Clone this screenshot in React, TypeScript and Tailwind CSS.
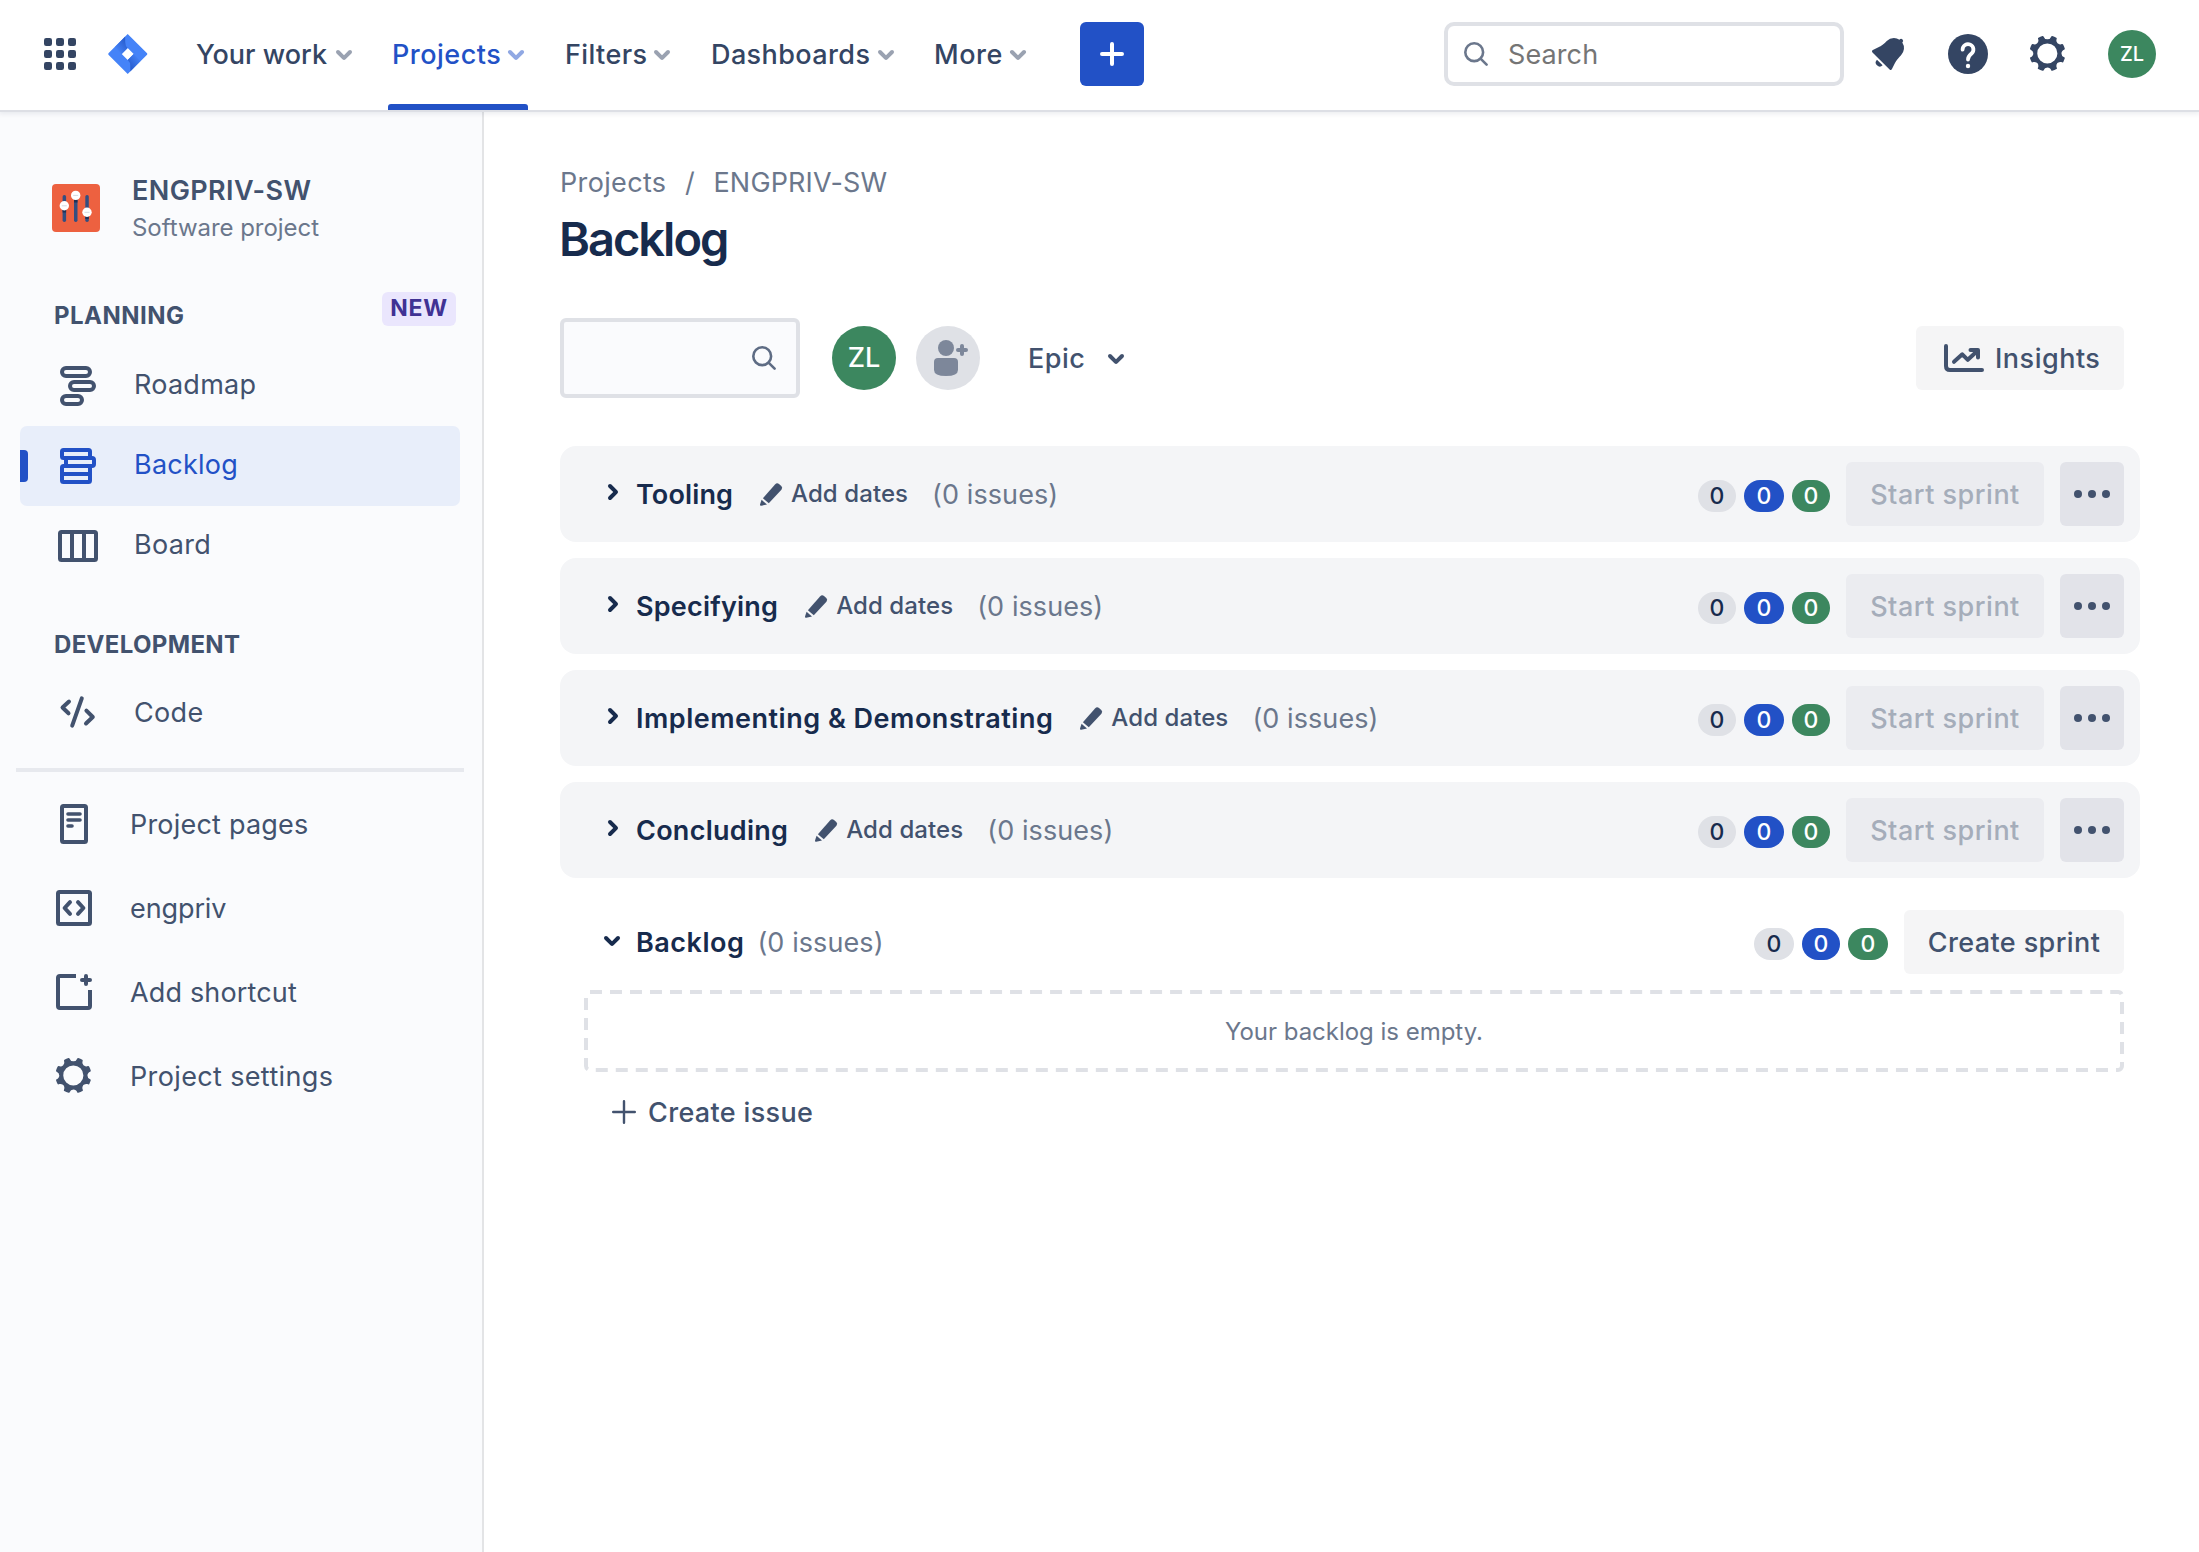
import type { ReactNode } from "react";

const GEAR =
  "M11.701 16.7a5.002 5.002 0 110-10.003 5.002 5.002 0 010 10.004m8.368-3.117a1.995 1.995 0 01-1.346-1.885c0-.876.563-1.613 1.345-1.885a.48.48 0 00.315-.574 8.947 8.947 0 00-.836-1.993.477.477 0 00-.598-.195 2.04 2.04 0 01-1.29.08 1.988 1.988 0 01-1.404-1.395 2.04 2.04 0 01.076-1.297.478.478 0 00-.196-.597 8.98 8.98 0 00-1.975-.826.479.479 0 00-.574.314 1.995 1.995 0 01-1.885 1.346 1.994 1.994 0 01-1.884-1.345.482.482 0 00-.575-.315c-.708.2-1.379.485-2.004.842a.47.47 0 00-.198.582A2.002 2.002 0 014.445 7.06a.478.478 0 00-.595.196 8.946 8.946 0 00-.833 1.994.48.48 0 00.308.572 1.995 1.995 0 011.323 1.877c0 .867-.552 1.599-1.324 1.877a.479.479 0 00-.308.57 8.99 8.99 0 00.723 1.79.477.477 0 00.624.194c.595-.273 1.343-.264 2.104.238.117.077.225.185.302.3.527.8.512 1.58.198 2.188a.473.473 0 00.168.628 8.946 8.946 0 002.11.897.474.474 0 00.57-.313 1.995 1.995 0 011.886-1.353c.878 0 1.618.567 1.887 1.353a.475.475 0 00.57.313 8.964 8.964 0 002.084-.883.473.473 0 00.167-.631c-.318-.608-.337-1.393.191-2.195.077-.116.185-.225.302-.302.772-.511 1.527-.513 2.125-.23a.477.477 0 00.628-.19 8.925 8.925 0 00.728-1.793.478.478 0 00-.314-.573";

function Gear({ className = "" }: { className?: string }) {
  return (
    <svg viewBox="0 0 24 24" className={`h-12 w-12 shrink-0 ${className}`} fill="currentColor" fillRule="evenodd">
      <path d={GEAR} />
    </svg>
  );
}

function ChevronDown({ className = "" }: { className?: string }) {
  return (
    <svg viewBox="8 10 8 5" className={`h-[10px] w-4 shrink-0 overflow-visible ${className}`} fill="currentColor">
      <path d="M8.292 10.293a1.009 1.009 0 000 1.419l2.939 2.965c.218.215.5.322.779.322s.556-.107.769-.322l2.93-2.955a1.01 1.01 0 000-1.419.987.987 0 00-1.406 0l-2.298 2.317-2.307-2.327a.99.99 0 00-1.406 0z" />
    </svg>
  );
}

function ChevronRight({ className = "" }: { className?: string }) {
  return (
    <svg viewBox="10 8 5 8" className={`h-4 w-[10px] shrink-0 overflow-visible ${className}`} fill="currentColor">
      <path d="M10.294 9.698a.988.988 0 010-1.407 1.01 1.01 0 011.419 0l2.965 2.94a1.09 1.09 0 010 1.548l-2.955 2.93a1.01 1.01 0 01-1.42 0 .988.988 0 010-1.407l2.318-2.297-2.327-2.307z" />
    </svg>
  );
}

function Magnifier({ className = "" }: { className?: string }) {
  return (
    <svg viewBox="0 0 24 24" className={`h-6 w-6 shrink-0 ${className}`} fill="none" stroke="currentColor" strokeWidth="2.6" strokeLinecap="round">
      <circle cx="10.2" cy="10.2" r="8.9" />
      <path d="M16.8 16.8 22.6 22.6" />
    </svg>
  );
}

function JiraLogo() {
  return (
    <svg viewBox="0 0 40 40" className="ml-8 h-10 w-10 shrink-0">
      <defs>
        <linearGradient id="fold-top" x1="19" y1="9" x2="9" y2="17" gradientUnits="userSpaceOnUse">
          <stop offset="0" stopColor="#2a5fd0" />
          <stop offset="1" stopColor="#4583f8" />
        </linearGradient>
        <linearGradient id="fold-bottom" x1="21" y1="31" x2="31" y2="23" gradientUnits="userSpaceOnUse">
          <stop offset="0" stopColor="#2a5fd0" />
          <stop offset="1" stopColor="#4583f8" />
        </linearGradient>
      </defs>
      <path
        fill="#4583f8"
        fillRule="evenodd"
        d="M19.7 0 38.8 19.1Q39.8 20 38.8 20.9L19.7 40 .7 20.9Q-.2 20 .7 19.1ZM19.7 14 13.7 20 19.7 26 25.7 20Z"
      />
      <path fill="url(#fold-top)" d="M17.2 2.5V8Q17.2 12 19.7 14L13.7 20 7 13Z" />
      <path fill="url(#fold-bottom)" d="M22.3 37.5V32Q22.3 28 19.7 26L25.7 20 32.4 27Z" />
    </svg>
  );
}

function AppGrid() {
  return (
    <svg viewBox="0 0 32 32" className="h-8 w-8 shrink-0 fill-[#344563]">
      {[0, 12, 24].map((y) => [0, 12, 24].map((x) => <rect key={`${x}-${y}`} x={x} y={y} width="8" height="8" rx="2.2" />))}
    </svg>
  );
}

function NavItem({ label, box, tracking, active = false }: { label: string; box: string; tracking: string; active?: boolean }) {
  return (
    <div
      className={`relative flex h-full items-center justify-between pb-[2px] text-[27px] font-medium whitespace-nowrap ${box} ${
        active ? "text-[#2251c6]" : "text-[#344563]"
      }`}
    >
      <span className={`mt-[2px] ${tracking}`}>{label}</span>
      <ChevronDown className={`mt-[2px] ${active ? "text-[#90a8e3]" : "text-[#9aa2b1]"}`} />
      {active && <span className="absolute bottom-0 left-[-4px] h-[6px] w-[140px] rounded-t-[3px] bg-[#2251c6]" />}
    </div>
  );
}

function Header() {
  return (
    <header className="relative z-10 flex h-[110px] shrink-0 items-center bg-white pl-11 shadow-[0_2px_0_#dddfe5,0_3px_5px_1px_rgba(9,30,66,0.08)]">
      <div className="flex items-center pb-[2px]">
        <AppGrid />
        <JiraLogo />
      </div>
      <nav className="ml-12 flex h-full">
        <NavItem label="Your work" box="w-[156px] mr-[40px]" tracking="tracking-[0.03px]" />
        <NavItem label="Projects" box="w-[132px] mr-[41px]" tracking="tracking-[0.5px]" active />
        <NavItem label="Filters" box="w-[105px] mr-[41px]" tracking="tracking-[0.4px]" />
        <NavItem label="Dashboards" box="w-[183px] mr-[40px]" tracking="tracking-[0.4px]" />
        <NavItem label="More" box="w-[92px] mr-[54px]" tracking="tracking-[0.5px]" />
      </nav>
      <button className="mb-[2px] flex h-16 w-16 items-center justify-center rounded-[6px] bg-[#2251c6]">
        <svg viewBox="0 0 24 24" className="h-6 w-6" stroke="#fff" strokeWidth="4" strokeLinecap="round">
          <path d="M12 2V22M2 12H22" />
        </svg>
      </button>
      <div className="mr-[43px] mb-[2px] ml-auto flex items-center text-[#344563]">
        <div className="flex h-16 w-[400px] items-center rounded-[10px] border-4 border-[#dfe1e6] pl-4">
          <Magnifier className="text-[#6b778c]" />
          <span className="mt-[2px] ml-5 text-[27px] tracking-[0.1px] text-[#757575]">Search</span>
        </div>
        <svg viewBox="0 0 24 24" className="ml-5 h-12 w-12" fill="currentColor">
          <path d="M6.485 17.669a2 2 0 002.829 0l-2.829-2.83a2 2 0 000 2.83zm4.897-12.191l-.725.725c-.782.782-2.21 1.813-3.206 2.311l-3.017 1.509c-.495.248-.584.774-.187 1.171l8.556 8.556c.398.396.922.313 1.171-.188l1.51-3.016c.494-.988 1.526-2.42 2.311-3.206l.725-.726a5.048 5.048 0 00.64-6.356 1.01 1.01 0 10-1.354-1.494c-.023.025-.046.049-.066.075a5.043 5.043 0 00-2.788-.84 5.036 5.036 0 00-3.57 1.478z" />
        </svg>
        <svg viewBox="0 0 48 48" className="ml-8 h-12 w-12">
          <circle cx="24" cy="24" r="20" fill="currentColor" />
          <path d="M18.6 19.6a5.4 5.4 0 1 1 8.8 4.1C25.2 25.5 24 26.4 24 29.6" fill="none" stroke="#fff" strokeWidth="3.8" strokeLinecap="round" />
          <circle cx="24" cy="36" r="2.2" fill="#fff" />
        </svg>
        <Gear className="ml-8" />
        <div className="ml-9 flex h-12 w-12 items-center justify-center rounded-full bg-[#3c875f] text-[20px] font-medium text-white">ZL</div>
      </div>
    </header>
  );
}

function LineIcon({ children }: { children: ReactNode }) {
  return (
    <svg viewBox="0 0 40 40" className="h-10 w-10 shrink-0" fill="none" stroke="currentColor" strokeWidth="4">
      {children}
    </svg>
  );
}

function SideItem({ icon, label, text, selected = false }: { icon: ReactNode; label: string; text: string; selected?: boolean }) {
  return (
    <div
      className={`relative mr-[22px] ml-5 flex h-20 items-center rounded-[7px] pl-[38px] text-[27px] ${
        selected ? "bg-[#e8eefa] text-[#2251c6]" : "text-[#42526e]"
      }`}
    >
      {selected && <span className="absolute top-6 left-0 h-8 w-2 rounded-r-[4px] bg-[#2251c6]" />}
      {icon}
      <span className={`ml-9 ${text}`}>{label}</span>
    </div>
  );
}

function ShortcutItem({ icon, label, tracking }: { icon: ReactNode; label: string; tracking: string }) {
  return (
    <div className="flex h-[84px] items-center pl-[54px] text-[27px] text-[#42526e]">
      <span className="flex h-10 w-10 items-center justify-center">{icon}</span>
      <span className={`mt-[2px] ml-9 ${tracking}`}>{label}</span>
    </div>
  );
}

function ProjectAvatar() {
  return (
    <svg viewBox="0 0 48 48" className="h-12 w-12 shrink-0">
      <rect width="48" height="48" rx="4" fill="#ed6140" />
      <g fill="#344e80">
        <rect x="10.6" y="11" width="3.5" height="27" rx="1.7" />
        <rect x="22" y="11" width="3.5" height="27" rx="1.7" />
        <rect x="33.3" y="11" width="3.5" height="27" rx="1.7" />
      </g>
      <g fill="#1f3157">
        <rect x="10.6" y="24" width="3.5" height="4.5" />
        <rect x="22" y="14" width="3.5" height="4.5" />
        <rect x="33.3" y="31" width="3.5" height="4" />
      </g>
      <g fill="#fff">
        <circle cx="12.3" cy="21.8" r="4.7" />
        <circle cx="23.7" cy="11.4" r="4.7" />
        <circle cx="35" cy="28.3" r="4.7" />
      </g>
      <g stroke="#d5dae3" strokeWidth="1">
        <path d="M9.8 21.8h5M21.2 11.4h5M32.5 28.3h5" />
      </g>
    </svg>
  );
}

function Sidebar() {
  return (
    <aside className="flex w-[484px] shrink-0 flex-col border-r-2 border-[#e3e4e6] bg-[#fafbfd]">
      <div className="mt-[66px] flex h-16 items-center pl-[52px]">
        <ProjectAvatar />
        <div className="ml-8 flex flex-col gap-[11px] pt-px">
          <span className="text-[27px] leading-7 font-semibold tracking-[0.4px] text-[#42526e]">ENGPRIV-SW</span>
          <span className="text-[24px] leading-6 tracking-[-0.04px] text-[#6b778c]">Software project</span>
        </div>
      </div>
      <div className="flex h-[106px] items-start justify-between pr-[26px] pl-[54px]">
        <span className="mt-16 text-[24px] leading-6 font-bold tracking-[0.48px] text-[#42526e]">PLANNING</span>
        <span className="mt-[52px] flex h-[34px] w-[74px] justify-center rounded-[6px] bg-[#eae6fd] pt-1 text-[23px] leading-6 font-bold tracking-[0.75px] text-[#403294]">
          NEW
        </span>
      </div>
      <SideItem
        label="Roadmap"
        text="pb-[2px] tracking-[0.25px]"
        icon={
          <LineIcon>
            <rect x="4" y="2" width="28" height="8" rx="4" />
            <rect x="12" y="16" width="24" height="8" rx="4" />
            <rect x="4" y="30" width="20" height="8" rx="4" />
          </LineIcon>
        }
      />
      <SideItem
        label="Backlog"
        text="pb-[2px] tracking-[0.25px]"
        selected
        icon={
          <LineIcon>
            <rect x="4" y="4" width="28" height="8" rx="1.5" />
            <rect x="8" y="12" width="28" height="8" rx="2" />
            <rect x="4" y="20" width="28" height="16" rx="1.5" />
            <path d="M4 28H32" />
          </LineIcon>
        }
      />
      <SideItem
        label="Board"
        text="pb-[2px] tracking-[0.3px]"
        icon={
          <LineIcon>
            <rect x="2" y="6" width="36" height="28" rx="1.5" />
            <path d="M14 6V34M26 6V34" />
          </LineIcon>
        }
      />
      <div className="h-[86px] pt-[47px] pl-[54px] text-[24px] leading-6 font-bold tracking-[0.34px] text-[#42526e]">DEVELOPMENT</div>
      <SideItem
        label="Code"
        text="pt-[2px] tracking-[0.35px]"
        icon={
          <svg viewBox="0 0 40 40" className="h-10 w-10 shrink-0" fill="none" stroke="currentColor" strokeWidth="4" strokeLinecap="round" strokeLinejoin="round">
            <path d="M11 9.5 4.5 15.5 10.5 21.3M23.8 6.3 14.2 33.6M28.4 18.6 34.8 25 28 31.5" />
          </svg>
        }
      />
      <div className="mt-4 mr-[18px] ml-4 h-1 bg-[#e7e9ee]" />
      <div className="mt-[10px]">
        <ShortcutItem
          label="Project pages"
          tracking="tracking-[0.2px]"
          icon={
            <LineIcon>
              <rect x="8" y="2" width="24" height="36" rx="1.5" />
              <path d="M14 10H26M14 16H26M14 22H18" strokeWidth="3.6" strokeLinecap="round" />
            </LineIcon>
          }
        />
        <ShortcutItem
          label="engpriv"
          tracking="tracking-[-0.1px]"
          icon={
            <LineIcon>
              <rect x="4" y="4" width="32" height="32" rx="1.5" />
              <path d="M16 14.2 10.6 20 16 25.8M24 14.2 29.4 20 24 25.8" strokeLinecap="round" strokeLinejoin="round" />
            </LineIcon>
          }
        />
        <ShortcutItem
          label="Add shortcut"
          tracking="tracking-[0.15px]"
          icon={
            <LineIcon>
              <path d="M22 4H6Q4 4 4 6V34Q4 36 6 36H34Q36 36 36 34V18" />
              <path d="M32 4V12M28 8H36" strokeLinecap="round" />
            </LineIcon>
          }
        />
        <ShortcutItem label="Project settings" tracking="tracking-[0.36px]" icon={<Gear />} />
      </div>
    </aside>
  );
}

function Counts({ widths }: { widths: [string, string, string] }) {
  return (
    <div className="mt-1 flex gap-2 text-[23px] leading-8 font-medium">
      <span className={`h-8 rounded-full bg-[#dfe1e6] text-center text-[#172b4d] ${widths[0]}`}>0</span>
      <span className={`h-8 rounded-full bg-[#2251c6] text-center text-white ${widths[1]}`}>0</span>
      <span className={`h-8 rounded-full bg-[#3c875f] text-center text-white ${widths[2]}`}>0</span>
    </div>
  );
}

function SprintRow({ name, tracking }: { name: string; tracking: string }) {
  return (
    <section className="mb-4 flex h-24 items-center rounded-[16px] bg-[#f4f5f7] pr-4 pl-12 whitespace-nowrap">
      <ChevronRight className="mb-1 text-[#172b4d]" />
      <h2 className={`mt-[2px] ml-[18px] text-[27px] font-semibold text-[#172b4d] ${tracking}`}>{name}</h2>
      <svg viewBox="0 0 24 24" className="ml-[26px] h-6 w-6 shrink-0 fill-[#42526e]">
        <path d="M3.9 16.2 16 2.4Q18 .5 20 2L22.3 4Q24 5.8 22.4 7.8L9.8 21.3Z" />
        <path d="M2.6 17.8 8 22.6 2.2 23.7Q.8 23.9 1 22.5Z" />
      </svg>
      <span className="ml-2 text-[24px] font-medium tracking-[0.08px] text-[#42526e]">Add dates</span>
      <span className="mt-[2px] ml-6 text-[27px] tracking-[0.08px] text-[#6b778c]">(0 issues)</span>
      <div className="ml-auto flex items-center gap-4">
        <Counts widths={["w-[38px]", "w-[40px]", "w-[38px]"]} />
        <button className="h-16 w-[198px] rounded-[6px] bg-[#ebecf0] pt-[2px] text-[27px] font-medium tracking-[0.5px] text-[#a5adba]">
          Start sprint
        </button>
        <button className="flex h-16 w-16 items-center justify-center gap-[6px] rounded-[6px] bg-[#e2e3e9]">
          <i className="h-2 w-2 rounded-full bg-[#42526e]" />
          <i className="h-2 w-2 rounded-full bg-[#42526e]" />
          <i className="h-2 w-2 rounded-full bg-[#42526e]" />
        </button>
      </div>
    </section>
  );
}

function Toolbar() {
  return (
    <div className="mt-[50px] flex h-20 items-center pr-4">
      <div className="flex h-20 w-[240px] items-center justify-end rounded-[6px] border-4 border-[#dfe1e6] bg-[#fafbfd] pr-5">
        <Magnifier className="text-[#5e6c84]" />
      </div>
      <div className="ml-8 flex h-16 w-16 items-center justify-center rounded-full bg-[#3c875f] pt-px text-[27px] font-medium text-white">ZL</div>
      <svg viewBox="0 0 64 64" className="ml-5 h-16 w-16 shrink-0">
        <circle cx="32" cy="32" r="32" fill="#dfe1e6" />
        <g fill="#7d879a">
          <circle cx="30" cy="22" r="8" />
          <path d="M18 36Q18 32 22 32H38Q42 32 42 36V44Q42 50 30 50Q18 50 18 44Z" />
        </g>
        <path d="M46 20V28M42 24H50" stroke="#7d879a" strokeWidth="4" strokeLinecap="round" />
      </svg>
      <div className="ml-12 flex w-24 items-center justify-between text-[#42526e]">
        <span className="mt-[2px] text-[27px] font-medium tracking-[0.5px]">Epic</span>
        <ChevronDown className="mt-[2px]" />
      </div>
      <button className="ml-auto flex h-16 w-[208px] items-center rounded-[6px] bg-[#f5f5f6] pl-7 text-[#42526e]">
        <svg viewBox="0 0 40 28" className="h-7 w-10 shrink-0" fill="none" stroke="currentColor" strokeWidth="4" strokeLinecap="round" strokeLinejoin="round">
          <path d="M2 2V22Q2 26 6 26H38M10 17.8 18.3 10.3 23.8 15.8 33 7.2M26.5 6H34V13.5" />
        </svg>
        <span className="mt-[2px] ml-[11px] text-[27px] font-medium tracking-[0.5px]">Insights</span>
      </button>
    </div>
  );
}

export default function App() {
  return (
    <div className="flex h-[1552px] w-[2199px] flex-col overflow-hidden bg-white font-['Inter',sans-serif]">
      <Header />
      <div className="flex flex-1">
        <Sidebar />
        <main className="w-[1656px] pt-14 pl-[76px]">
          <div className="flex h-8 items-center pt-[2px] text-[27px] text-[#6b778c]">
            <span className="tracking-[0.35px]">Projects</span>
            <span className="w-[47px] text-center">/</span>
            <span className="tracking-[0.16px]">ENGPRIV-SW</span>
          </div>
          <h1 className="mt-[12px] -ml-px h-[58px] text-[47px] leading-[58px] font-semibold tracking-[-2px] text-[#172b4d]">Backlog</h1>
          <Toolbar />
          <div className="mt-12">
            <SprintRow name="Tooling" tracking="tracking-[0.13px]" />
            <SprintRow name="Specifying" tracking="tracking-[0.21px]" />
            <SprintRow name="Implementing &amp; Demonstrating" tracking="tracking-[0.51px]" />
            <SprintRow name="Concluding" tracking="tracking-[0.27px]" />
          </div>
          <section className="pt-4 pr-4">
            <div className="flex h-16 items-center pl-11">
              <ChevronDown className="mb-[2px] text-[#172b4d]" />
              <h2 className="mt-[2px] ml-4 text-[27px] font-semibold tracking-[0.52px] text-[#172b4d]">Backlog</h2>
              <span className="mt-[2px] ml-[13px] text-[27px] tracking-[0.08px] text-[#6b778c]">(0 issues)</span>
              <div className="ml-auto flex items-center gap-4">
                <Counts widths={["w-[40px]", "w-[38px]", "w-[40px]"]} />
                <button className="h-16 w-[220px] rounded-[6px] bg-[#f5f5f6] pt-[2px] text-[27px] font-medium tracking-[0.4px] text-[#42526e]">
                  Create sprint
                </button>
              </div>
            </div>
            <div className="relative mt-4 ml-6 flex h-[82px] items-center justify-center">
              <svg className="absolute inset-0 h-full w-full" fill="none">
                <rect x="2" y="2" width="1536" height="78" rx="4" stroke="#dfe1e6" strokeWidth="4" pathLength="3220" strokeDasharray="12 8" />
              </svg>
              <span className="mt-[2px] text-[24px] tracking-[-0.02px] text-[#6b778c]">Your backlog is empty.</span>
            </div>
            <div className="mt-4 flex h-12 items-center pl-[52px] text-[#42526e]">
              <svg viewBox="0 0 24 24" className="h-6 w-6" stroke="currentColor" strokeWidth="2.4" strokeLinecap="round">
                <path d="M12 1.2V22.8M1.2 12H22.8" />
              </svg>
              <span className="mt-[2px] ml-3 text-[27px] font-medium tracking-[0.34px]">Create issue</span>
            </div>
          </section>
        </main>
      </div>
    </div>
  );
}
